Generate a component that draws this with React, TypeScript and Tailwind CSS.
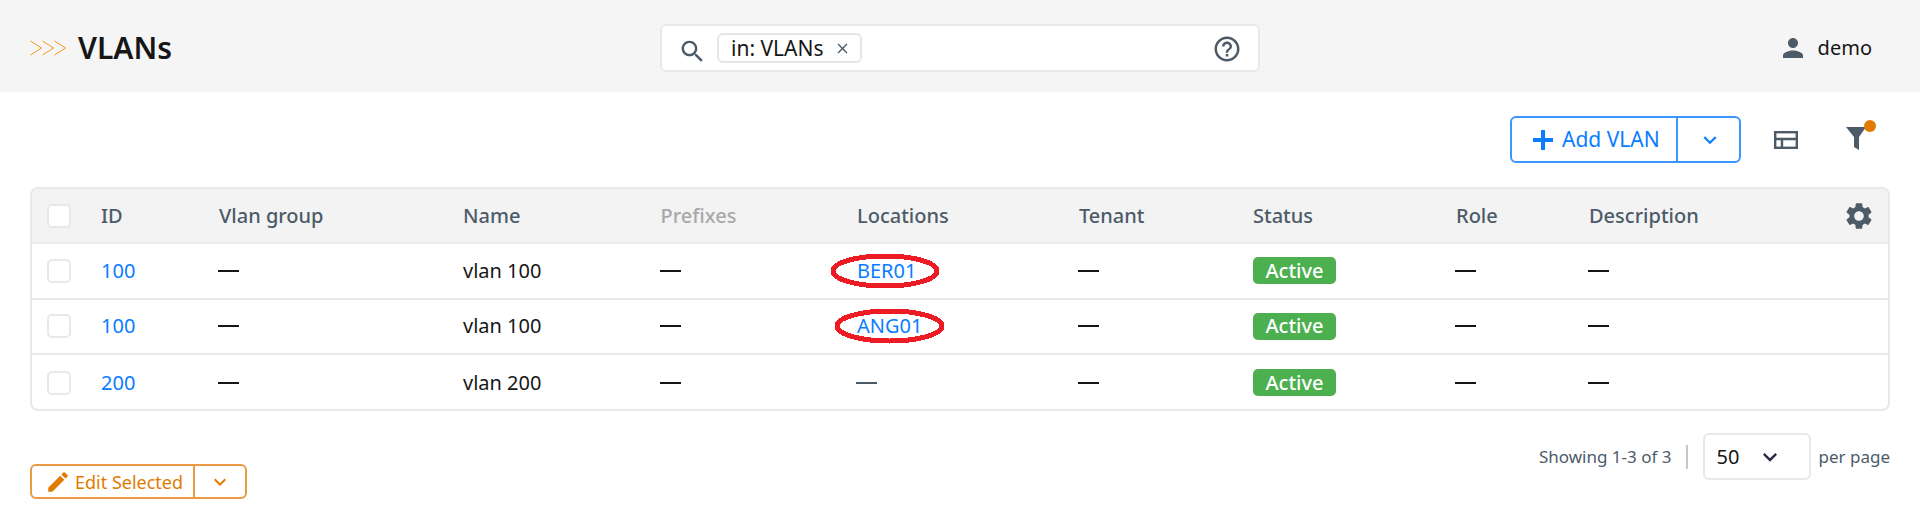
const font = "font-['Noto_Sans','Open_Sans',sans-serif]";

const columns =
  'grid grid-cols-[53px_118px_244px_197.5px_196.5px_222px_174px_203px_133px_256px_minmax(0,1fr)]';

const rows = [
  { id: '100', name: 'vlan 100', location: 'BER01', ring: 'w-[110px] -ml-[27px]' },
  { id: '100', name: 'vlan 100', location: 'ANG01', ring: 'w-[111px] -ml-[23px]' },
  { id: '200', name: 'vlan 200', location: '', ring: '' },
];

const headers = ['ID', 'Vlan group', 'Name', 'Prefixes', 'Locations', 'Tenant', 'Status', 'Role', 'Description'];

const MuiIcon = ({ d, className }: { d: string; className: string }) => (
  <svg viewBox="0 0 24 24" fill="currentColor" className={className}>
    <path d={d} />
  </svg>
);

const icons = {
  search:
    'M15.5 14h-.79l-.28-.27C15.41 12.59 16 11.11 16 9.5 16 5.91 13.09 3 9.5 3S3 5.91 3 9.5 5.91 16 9.5 16c1.61 0 3.09-.59 4.23-1.57l.27.28v.79l5 4.99L20.49 19l-4.99-5zm-6 0C7.01 14 5 11.99 5 9.5S7.01 5 9.5 5 14 7.01 14 9.5 11.99 14 9.5 14z',
  close:
    'M19 6.41L17.59 5 12 10.59 6.41 5 5 6.41 10.59 12 5 17.59 6.41 19 12 13.41 17.59 19 19 17.59 13.41 12z',
  help:
    'M11 18h2v-2h-2v2zm1-16C6.48 2 2 6.48 2 12s4.48 10 10 10 10-4.48 10-10S17.52 2 12 2zm0 18c-4.41 0-8-3.59-8-8s3.59-8 8-8 8 3.59 8 8-3.59 8-8 8zm0-14c-2.21 0-4 1.79-4 4h2c0-1.1.9-2 2-2s2 .9 2 2c0 2-3 1.75-3 5h2c0-2.25 3-2.5 3-5 0-2.21-1.79-4-4-4z',
  person:
    'M12 12c2.21 0 4-1.79 4-4s-1.79-4-4-4-4 1.79-4 4 1.79 4 4 4zm0 2c-2.67 0-8 1.34-8 4v2h16v-2c0-2.66-5.33-4-8-4z',
  chevron: 'M16.59 8.59L12 13.17 7.41 8.59 6 10l6 6 6-6z',
  gear:
    'M19.14 12.94c.04-.3.06-.61.06-.94 0-.32-.02-.64-.07-.94l2.03-1.58c.18-.14.23-.41.12-.61l-1.92-3.32c-.12-.22-.37-.29-.59-.22l-2.39.96c-.5-.38-1.03-.7-1.62-.94l-.36-2.54c-.04-.24-.24-.41-.48-.41h-3.84c-.24 0-.43.17-.47.41l-.36 2.54c-.59.24-1.13.57-1.62.94l-2.39-.96c-.22-.08-.47 0-.59.22L2.74 8.87c-.12.21-.08.47.12.61l2.03 1.58c-.05.3-.09.63-.09.94s.02.64.07.94l-2.03 1.58c-.18.14-.23.41-.12.61l1.92 3.32c.12.22.37.29.59.22l2.39-.96c.5.38 1.03.7 1.62.94l.36 2.54c.05.24.24.41.48.41h3.84c.24 0 .44-.17.47-.41l.36-2.54c.59-.24 1.13-.56 1.62-.94l2.39.96c.22.08.47 0 .59-.22l1.92-3.32c.12-.22.07-.47-.12-.61l-2.01-1.58zM12 15.6c-1.98 0-3.6-1.62-3.6-3.6s1.62-3.6 3.6-3.6 3.6 1.62 3.6 3.6-1.62 3.6-3.6 3.6z',
  edit:
    'M3 17.25V21h3.75L17.81 9.94l-3.75-3.75L3 17.25zM20.71 7.04c.39-.39.39-1.02 0-1.41l-2.34-2.34c-.39-.39-1.02-.39-1.41 0l-1.83 1.83 3.75 3.75 1.83-1.83z',
};

const Dash = ({ className = 'text-[#161616]' }: { className?: string }) => (
  <span className={`-ml-px block h-[2px] w-[21px] bg-current ${className}`} />
);

const Checkbox = () => (
  <span className="-ml-px block h-[24px] w-[24px] rounded-[5px] border-2 border-[#e8e8e8] bg-white" />
);

const Cell = ({ children }: { children?: React.ReactNode }) => (
  <div className="flex items-center pl-[16px]">{children}</div>
);

const HeadCell = ({ children, last }: { children?: React.ReactNode; last?: boolean }) => (
  <div className={`flex items-center pl-[16px] ${last ? '' : 'border-r border-[#f5f5f5]'}`}>{children}</div>
);

export default function App() {
  return (
    <div className={`${font} h-[510px] w-[1920px] overflow-hidden bg-white`}>
      <header className="flex h-[92px] items-center bg-[#f5f5f5] pl-[30px] pr-[48px] pt-[4px]">
        <div className="flex w-[630px] items-center">
          <svg viewBox="0 0 36 16" className="h-[16px] w-[36px] text-[#f7941d]" fill="none" stroke="currentColor">
            <path d="M0.5 1 L11.5 8 L0.5 15 M12.5 1 L23.5 8 L12.5 15 M24.5 1 L35.5 8 L24.5 15" />
          </svg>
          <h1 className="ml-[12px] text-[30px] font-semibold leading-none text-[#161616]">VLANs</h1>
        </div>

        <div className="flex h-[48px] w-[600px] items-center rounded-[6px] border-2 border-[#e8e8e8] bg-white pl-[16px] pr-[16px]">
          <MuiIcon d={icons.search} className="mt-[6px] h-[29px] w-[29px] text-[#4d5b69]" />
          <div className="ml-[10px] flex h-[30px] items-center rounded-[6px] border-2 border-[#e6e6e6] pl-[12px] pr-[9px]">
            <span className="text-[21px] leading-none text-[#161616]">in: VLANs</span>
            <MuiIcon d={icons.close} className="ml-[10px] h-[17px] w-[17px] text-[#4d5b69]" />
          </div>
          <MuiIcon d={icons.help} className="ml-auto mt-[2px] h-[30px] w-[30px] text-[#4d5b69]" />
        </div>

        <div className="ml-auto flex items-center">
          <MuiIcon d={icons.person} className="h-[30px] w-[30px] text-[#4d5b69]" />
          <span className="ml-[10px] text-[20px] leading-none text-[#161616]">demo</span>
        </div>
      </header>

      <div className="flex items-center pl-[1510px] pt-[24px]">
        <div className="flex h-[47px] w-[231px] items-center rounded-[6px] border-2 border-[#3b97ff] text-[#0a7cff]">
          <div className="flex h-full w-[166px] items-center border-r-2 border-[#3b97ff] pl-[21px]">
            <svg viewBox="0 0 20 24" className="h-[24px] w-[20px] shrink-0" fill="currentColor">
              <path d="M8 2h4v8h8v4h-8v8H8v-8H0v-4h8z" />
            </svg>
            <span className="ml-[9px] whitespace-nowrap text-[21px] leading-none">Add VLAN</span>
          </div>
          <MuiIcon d={icons.chevron} className="ml-[19px] h-[26px] w-[26px]" />
        </div>
        <svg viewBox="0 0 24 18" className="ml-[33px] h-[18px] w-[24px] text-[#4d5b69]" fill="none" stroke="currentColor" strokeWidth="2.4">
          <rect x="1.2" y="1.2" width="21.6" height="15.6" />
          <path d="M1 8h22M8 8v9" />
        </svg>
        <div className="relative ml-[48px] h-[36px] w-[32px]">
          <svg viewBox="0 0 20 23" className="absolute left-0 top-[5px] h-[23px] w-[20px] text-[#4d5b69]" fill="currentColor">
            <path d="M0 0h20L13 10v13l-5-3v-10z" />
          </svg>
          <span className="absolute left-[18px] top-[-2px] h-[12px] w-[12px] rounded-full bg-[#e07b00]" />
        </div>
      </div>

      <div className="ml-[30px] mt-[24px] h-[224px] w-[1860px] overflow-hidden rounded-[8px] border-2 border-[#e8e8e8]">
        <div className={`${columns} h-[55px] border-b-2 border-[#ebebeb] bg-[#f3f3f3] text-[20px] font-medium text-[#4d5b69]`}>
          <HeadCell>
            <Checkbox />
          </HeadCell>
          {headers.map((h) => (
            <HeadCell key={h}>
              <span className={h === 'Prefixes' ? 'text-[#a9a9a9]' : ''}>{h}</span>
            </HeadCell>
          ))}
          <HeadCell last>
            <MuiIcon d={icons.gear} className="ml-[-2px] h-[32px] w-[32px] shrink-0" />
          </HeadCell>
        </div>

        {rows.map((row, i) => (
          <div
            key={i}
            className={`${columns} h-[55.5px] text-[20px] text-[#161616] ${i < rows.length - 1 ? 'border-b-2 border-[#e8e8e8]' : ''}`}
          >
            <Cell>
              <Checkbox />
            </Cell>
            <Cell>
              <span className="text-[#0a7cff]">{row.id}</span>
            </Cell>
            <Cell>
              <Dash />
            </Cell>
            <Cell>{row.name}</Cell>
            <Cell>
              <Dash />
            </Cell>
            <Cell>
              {row.location ? (
                <span className="relative text-[#0a7cff]">
                  {row.location}
                  <svg
                    viewBox="0 0 110 35"
                    preserveAspectRatio="none"
                    shapeRendering="crispEdges"
                    className={`absolute left-0 top-1/2 h-[35px] -translate-y-1/2 ${row.ring}`}
                    fill="none"
                    stroke="#ed1c24"
                    strokeWidth="5"
                  >
                    <ellipse cx="55" cy="17.5" rx="52" ry="15" />
                  </svg>
                </span>
              ) : (
                <Dash className="text-[#4d5b69]" />
              )}
            </Cell>
            <Cell>
              <Dash />
            </Cell>
            <Cell>
              <span className="flex h-[27px] w-[83px] items-center justify-center rounded-[5px] bg-[#4caf50] text-[20px] font-medium text-white">
                Active
              </span>
            </Cell>
            <Cell>
              <Dash />
            </Cell>
            <Cell>
              <Dash />
            </Cell>
            <Cell />
          </div>
        ))}
      </div>

      <div className="ml-[30px] mt-[22px] flex items-start">
        <div className="mt-[31px] flex h-[35px] w-[217px] items-center rounded-[6px] border-2 border-[#eb9a44] text-[#e07b00]">
          <div className="flex h-full w-[163px] items-center border-r-2 border-[#eb9a44] pl-[13px]">
            <MuiIcon d={icons.edit} className="h-[26px] w-[26px] shrink-0" />
            <span className="ml-[4px] whitespace-nowrap text-[18px] leading-none">Edit Selected</span>
          </div>
          <MuiIcon d={icons.chevron} className="ml-[13px] h-[24px] w-[24px]" />
        </div>

        <div className="ml-auto mr-[30px] flex items-center text-[17px] text-[#4d5b69]">
          <span>Showing 1-3 of 3</span>
          <span className="ml-[15px] h-[24px] w-[2px] bg-[#c4c6cf]" />
          <div className="ml-[15px] flex h-[47px] w-[108px] items-center rounded-[6px] border-2 border-[#e8e8e8] pl-[11px] text-[20px] text-[#161616]">
            50
            <MuiIcon d={icons.chevron} className="ml-[17px] h-[28px] w-[28px] text-[#2a2a45]" />
          </div>
          <span className="ml-[7px]">per page</span>
        </div>
      </div>
    </div>
  );
}
